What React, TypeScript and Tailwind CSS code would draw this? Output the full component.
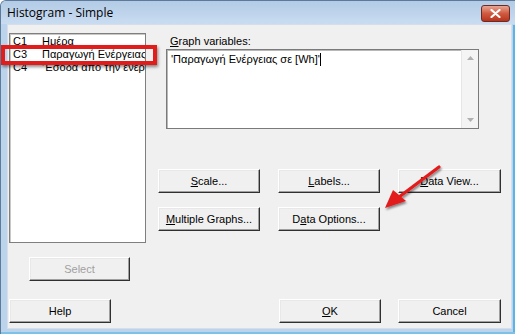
import React from "react";

const font = { fontFamily: '"Liberation Sans", "DejaVu Sans", sans-serif' };

function Btn({ children, className = "", disabled = false }: { children: React.ReactNode; className?: string; disabled?: boolean }) {
  return (
    <div
      className={
        "h-[24px] flex items-center justify-center text-[11px] bg-[#f0f0f0] border border-t-white border-l-white border-r-[#303030] border-b-[#303030] shadow-[inset_-1px_-1px_0_#a0a0a0,inset_1px_1px_0_#e8e8e8] " +
        (disabled ? "text-[#a0a0a0] " : "text-black ") +
        className
      }
    >
      {children}
    </div>
  );
}

const rows = [
  { c: "C1", name: "Ημέρα" },
  { c: "C3", name: "Παραγωγή Ενέργειας σε [Wh]" },
  { c: "C4", name: "'Έσοδα από την ενέργεια'" },
];

export default function App() {
  return (
    <div className="w-[515px] h-[334px] relative overflow-hidden flex flex-col bg-[#bcd3ec] border-t border-l border-[#5d7a99] rounded-tl-[6px]" style={font}>
      {/* title bar */}
      <div className="h-[23px] flex items-center pl-[6px] bg-gradient-to-b from-[#b3cbe6] to-[#c9dcf1]">
        <span className="text-[12px] text-black" style={{ fontFamily: '"Open Sans", "Liberation Sans", sans-serif' }}>
          Histogram - Simple
        </span>
        <div className="ml-auto mr-[5px] mt-[1px] w-[29px] h-[17px] rounded-[3px] border border-[#6b2a22] bg-gradient-to-b from-[#e8a594] via-[#cf5a3f] to-[#b8331c] flex items-center justify-center">
          <svg width="11" height="9" viewBox="0 0 11 9">
            <path d="M1.5 1 L9.5 8 M9.5 1 L1.5 8" stroke="#ffffff" strokeWidth="2.2" strokeLinecap="round" />
          </svg>
        </div>
      </div>

      {/* client area */}
      <div className="flex-1 ml-[6px] mr-[3px] mb-[5px] bg-[#f0f0f0] border border-[#d6dfe9] flex flex-col">
        <div className="flex">
          {/* left column */}
          <div className="pt-[8px] pl-[1px] flex flex-col">
            <div className="w-[137px] h-[210px] bg-white border border-[#7f7f7f] shadow-[inset_1px_1px_0_#c8c8c8] overflow-hidden pt-[1px]">
              {rows.map((r) => (
                <div key={r.c} className="flex h-[13px] leading-[13px] text-[11px] text-black whitespace-nowrap">
                  <span className="w-[32px] pl-[3px] shrink-0">{r.c}</span>
                  <span className="overflow-hidden">{r.name}</span>
                </div>
              ))}
            </div>
            <Btn disabled className="mt-[14px] ml-[20px] w-[101px]">Select</Btn>
          </div>

          {/* right column */}
          <div className="ml-[12px] flex flex-col">
            <div className="pt-[10px] pl-[12px] h-[23px] leading-[13px] text-[11px] text-black">
              <span className="underline">G</span>raph variables:
            </div>
            <div className="ml-[8px] mt-[1px] w-[313px] h-[80px] bg-white border border-[#7a7a7a] shadow-[inset_1px_1px_0_#b8b8b8] flex">
              <div className="flex-1 pl-[4px] pt-[3px] text-[11px] leading-[13px] text-black whitespace-nowrap">
                'Παραγωγή Ενέργειας σε [Wh]'<span className="inline-block w-px h-[13px] bg-black align-top" />
              </div>
              <div className="w-[17px] bg-[#f4f4f4] border-l border-[#e6e6e6] flex flex-col items-center justify-between py-[6px]">
                <svg width="7" height="4" viewBox="0 0 7 4"><path d="M0 4 L3.5 0 L7 4 Z" fill="#b0b0b0" /></svg>
                <svg width="7" height="4" viewBox="0 0 7 4"><path d="M0 0 L3.5 4 L7 0 Z" fill="#b0b0b0" /></svg>
              </div>
            </div>
            <div className="mt-[40px] flex gap-[18px]">
              <Btn className="w-[102px]"><span className="underline">S</span>cale...</Btn>
              <Btn className="w-[102px]"><span className="underline">L</span>abels...</Btn>
              <Btn className="w-[103px]"><span className="underline">D</span>ata View...</Btn>
            </div>
            <div className="mt-[14px] flex gap-[18px]">
              <Btn className="w-[102px]"><span className="underline">M</span>ultiple Graphs...</Btn>
              <Btn className="w-[102px]">D<span className="underline">a</span>ta Options...</Btn>
            </div>
          </div>
        </div>

        {/* bottom buttons */}
        <div className="mt-[18px] flex pl-[1px]">
          <Btn className="w-[102px]">Help</Btn>
          <Btn className="ml-[168px] w-[102px]"><span className="underline">O</span>K</Btn>
          <Btn className="ml-[17px] w-[103px]">Cancel</Btn>
        </div>
      </div>

      {/* right / bottom frame accents */}
      <div className="absolute right-0 top-[24px] bottom-0 w-[2px] bg-[#5cb4e6]" />
      <div className="absolute left-0 right-0 bottom-0 h-[2px] bg-[#7cc1e8]" />

      {/* annotation: red box */}
      <div className="absolute left-0 top-[44px] w-[156px] h-[20px] border-[4px] border-[#e21b1b] shadow-[1px_2px_3px_rgba(0,0,0,0.45)]" />

      {/* annotation: red arrow */}
      <svg className="absolute left-[378px] top-[160px]" width="66" height="54" viewBox="0 0 66 54">
        <defs>
          <filter id="sh" x="-20%" y="-20%" width="140%" height="140%">
            <feDropShadow dx="1" dy="2" stdDeviation="1.2" floodColor="#000" floodOpacity="0.45" />
          </filter>
        </defs>
        <g filter="url(#sh)">
          <line x1="60" y1="6" x2="20" y2="36" stroke="#e21b1b" strokeWidth="3.2" strokeLinecap="round" />
          <path d="M6 47 L14 29 L27 40 Z" fill="#e21b1b" />
        </g>
      </svg>
    </div>
  );
}
